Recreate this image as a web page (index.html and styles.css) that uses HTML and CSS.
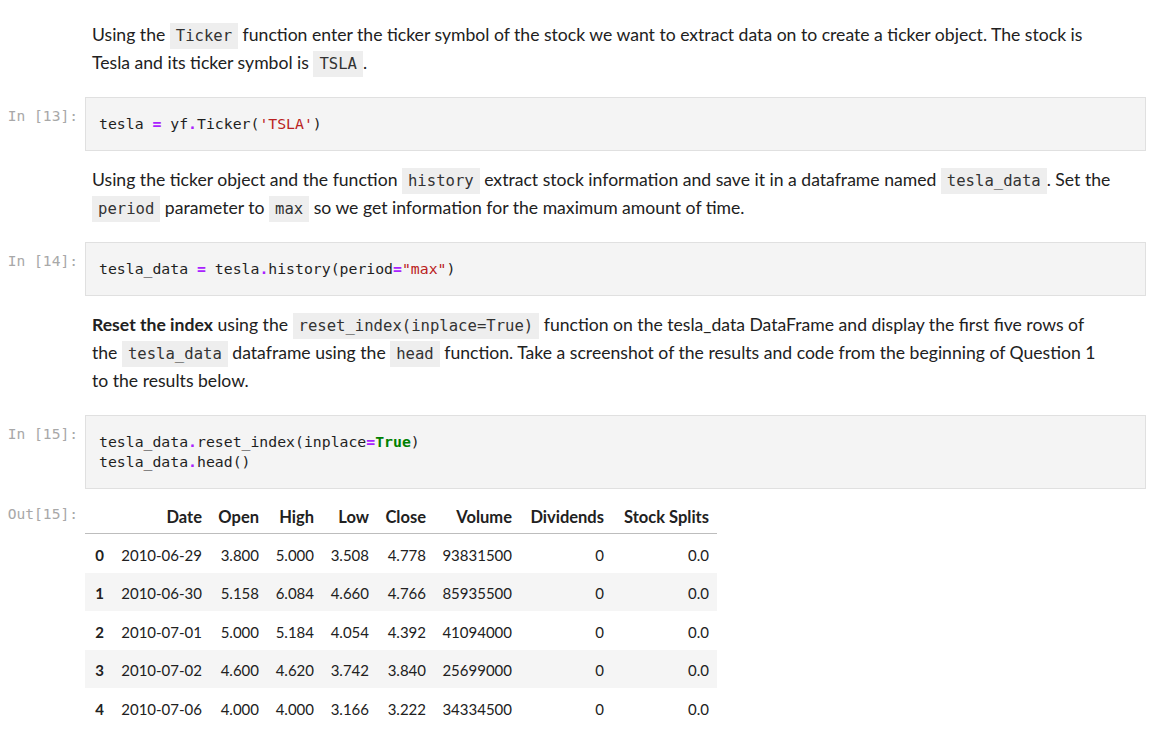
FILE: index.html
```html
<!DOCTYPE html>
<html>
<head>
<meta charset="utf-8">
<link rel="stylesheet" href="styles.css">
</head>
<body>
<div class="notebook">
  <div class="cell md-cell first">
    <div class="prompt"></div>
    <div class="md">Using the <code>Ticker</code> function enter the ticker symbol of the stock we want to extract data on to create a ticker object. The stock is<br>Tesla and its ticker symbol is <code>TSLA</code>.</div>
  </div>

  <div class="cell code-cell">
    <div class="prompt">In&nbsp;[13]:</div>
    <div class="input"><pre>tesla <span class="op">=</span> yf<span class="op">.</span>Ticker(<span class="str">'TSLA'</span>)</pre></div>
  </div>

  <div class="cell md-cell">
    <div class="prompt"></div>
    <div class="md">Using the ticker object and the function <code>history</code> extract stock information and save it in a dataframe named <code>tesla_data</code>. Set the<br><code>period</code> parameter to <code>max</code> so we get information for the maximum amount of time.</div>
  </div>

  <div class="cell code-cell">
    <div class="prompt">In&nbsp;[14]:</div>
    <div class="input"><pre>tesla_data <span class="op">=</span> tesla<span class="op">.</span>history(period<span class="op">=</span><span class="str">"max"</span>)</pre></div>
  </div>

  <div class="cell md-cell">
    <div class="prompt"></div>
    <div class="md"><strong>Reset the index</strong> using the <code>reset_index(inplace=True)</code> function on the tesla_data DataFrame and display the first five rows of<br>the <code>tesla_data</code> dataframe using the <code>head</code> function. Take a screenshot of the results and code from the beginning of Question 1<br>to the results below.</div>
  </div>

  <div class="cell code-cell">
    <div class="prompt">In&nbsp;[15]:</div>
    <div class="input"><pre>tesla_data<span class="op">.</span>reset_index(inplace<span class="op">=</span><span class="kw">True</span>)
tesla_data<span class="op">.</span>head()</pre></div>
  </div>

  <div class="cell out-cell">
    <div class="prompt out-prompt">Out[15]:</div>
    <div class="output">
      <table class="df">
        <colgroup>
          <col class="c-idx"><col class="c-date"><col class="c-open"><col class="c-high"><col class="c-low"><col class="c-close"><col class="c-vol"><col class="c-div"><col class="c-split">
        </colgroup>
        <thead>
          <tr><th></th><th>Date</th><th>Open</th><th>High</th><th>Low</th><th>Close</th><th>Volume</th><th>Dividends</th><th>Stock Splits</th></tr>
        </thead>
        <tbody>
          <tr><th>0</th><td>2010-06-29</td><td>3.800</td><td>5.000</td><td>3.508</td><td>4.778</td><td>93831500</td><td>0</td><td>0.0</td></tr>
          <tr><th>1</th><td>2010-06-30</td><td>5.158</td><td>6.084</td><td>4.660</td><td>4.766</td><td>85935500</td><td>0</td><td>0.0</td></tr>
          <tr><th>2</th><td>2010-07-01</td><td>5.000</td><td>5.184</td><td>4.054</td><td>4.392</td><td>41094000</td><td>0</td><td>0.0</td></tr>
          <tr><th>3</th><td>2010-07-02</td><td>4.600</td><td>4.620</td><td>3.742</td><td>3.840</td><td>25699000</td><td>0</td><td>0.0</td></tr>
          <tr><th>4</th><td>2010-07-06</td><td>4.000</td><td>4.000</td><td>3.166</td><td>3.222</td><td>34334500</td><td>0</td><td>0.0</td></tr>
        </tbody>
      </table>
    </div>
  </div>
</div>
</body>
</html>
```
FILE: styles.css
```css
html, body {
  margin: 0;
  padding: 0;
  background: #ffffff;
}

body {
  font-family: Lato, "Open Sans", sans-serif;
  color: #212121;
}

.notebook {
  width: 1146px;
}

.cell {
  display: flex;
  align-items: flex-start;
}

.prompt {
  flex: 0 0 85px;
  width: 85px;
  box-sizing: border-box;
  padding-right: 7px;
  text-align: right;
  font-family: "DejaVu Sans Mono", monospace;
  font-size: 14.6px;
  line-height: 20px;
  color: #a8a8a8;
  padding-top: 9px;
}

.md-cell {
  padding-top: 15px;
  padding-bottom: 20px;
}

.md-cell.first {
  padding-top: 21px;
}

.md {
  flex: 1;
  padding-left: 7px;
  font-size: 17.6px;
  line-height: 28px;
  white-space: nowrap;
}

.md strong {
  font-weight: 700;
}

.md code {
  font-family: "DejaVu Sans Mono", monospace;
  font-size: 15.6px;
  line-height: 1;
  background: #eeeeee;
  color: #333333;
  padding: 4px 6px;
}

.input {
  flex: 1;
  background: #f4f4f4;
  border: 1px solid #e0e0e0;
  padding: 16px 13px;
}

.input pre {
  margin: 0;
  font-family: "DejaVu Sans Mono", monospace;
  font-size: 14.8px;
  line-height: 20px;
  color: #1f1f1f;
}

.op {
  color: #aa22ff;
  font-weight: bold;
}

.str {
  color: #ba2121;
}

.kw {
  color: #008000;
  font-weight: bold;
}

.out-cell {
  padding-top: 11px;
}

.out-prompt {
  padding-top: 4px;
}

.output {
  flex: 1;
}

.df {
  width: 632px;
  border-collapse: collapse;
  table-layout: fixed;
  font-size: 15px;
  color: #212121;
}

.c-idx { width: 27px; }
.c-date { width: 98px; }
.c-open { width: 57px; }
.c-high { width: 55px; }
.c-low { width: 55px; }
.c-close { width: 57px; }
.c-vol { width: 86px; }
.c-div { width: 92px; }
.c-split { width: 105px; }

.df th, .df td {
  text-align: right;
  padding: 10.5px 8px 8px;
  line-height: 20px;
  white-space: nowrap;
}

.df th {
  font-weight: 700;
}

.df thead th {
  font-size: 16.5px;
  padding: 7px 8px 6px;
  border-bottom: 1px solid #bdbdbd;
}

.df tbody tr:nth-child(even) {
  background: #f5f5f5;
}
```
